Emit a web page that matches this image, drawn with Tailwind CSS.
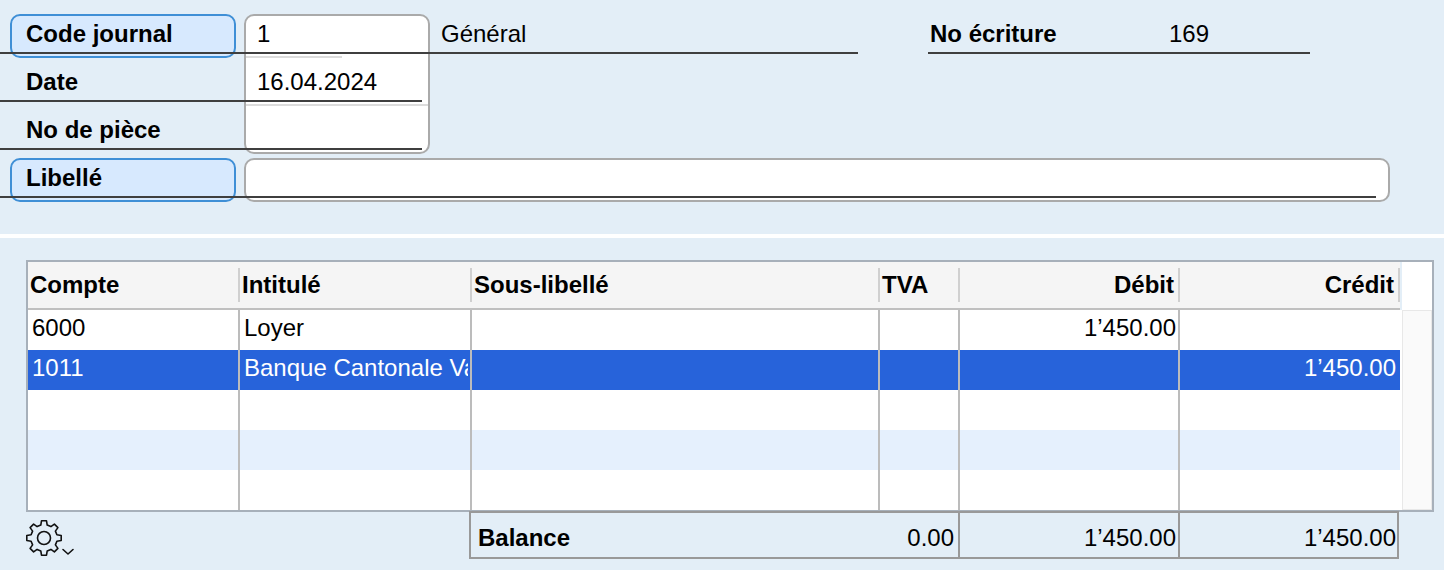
<!DOCTYPE html>
<html lang="fr">
<head>
<meta charset="utf-8">
<meta name="viewport" content="width=device-width, initial-scale=1">
<title>Écriture</title>
<script src="https://cdn.jsdelivr.net/npm/@tailwindcss/browser@4"></script>
</head>
<body class="min-h-screen bg-[#e3eef7] font-['Liberation_Sans',Arial,sans-serif] text-2xl/7 text-black">
<form class="relative pt-3.5 pb-8">
  <div class="flex pl-2.5">
    <div class="flex w-[226px] shrink-0 flex-col">
      <button type="button" class="h-11 rounded-[10px] border-2 border-[#3f8fd6] bg-[#d7e9fe] pb-1 pl-3.5 text-left font-bold">Code journal</button>
      <label for="date" class="flex h-12 items-center pl-4 font-bold">Date</label>
      <label for="piece" class="flex h-12 items-center pl-4 font-bold">No de pièce</label>
    </div>
    <div class="ml-2 flex w-[186px] shrink-0 flex-col rounded-[10px] border-2 border-[#aaaaaa] bg-white">
      <input id="code" aria-label="Code journal" value="1" class="h-10 w-full bg-transparent pb-1 pl-[11px] outline-none">
      <div class="h-0.5 w-24 bg-[#dcdcdc]"></div>
      <input id="date" value="16.04.2024" class="h-[46px] w-full bg-transparent pt-0.5 pl-[11px] outline-none">
      <div class="h-0.5 bg-[#dcdcdc]"></div>
      <input id="piece" class="h-[46px] w-full bg-transparent pt-0.5 pl-[11px] outline-none">
    </div>
    <div class="flex h-10 min-w-0 flex-1 items-center pl-[11px]">
      <span class="w-[487px]">Général</span>
      <div class="flex h-10 w-[382px] items-center border-b-2 border-[#3f3f3f] pt-0.5 pl-0.5">
        <span id="ecriture" class="w-[239px] font-bold">No écriture</span>
        <output aria-labelledby="ecriture">169</output>
      </div>
    </div>
  </div>
  <div class="mt-1 flex gap-2 pr-[54px] pl-2.5">
    <button type="button" class="h-11 w-[226px] shrink-0 rounded-[10px] border-2 border-[#3f8fd6] bg-[#d7e9fe] pb-1 pl-3.5 text-left font-bold">Libellé</button>
    <input aria-label="Libellé" class="h-11 min-w-0 flex-1 rounded-[10px] border-2 border-[#aaaaaa] bg-white px-[11px] pb-1 outline-none">
  </div>
  <!-- Rules drawn across the labels and fields -->
  <div class="pointer-events-none absolute inset-x-0 top-[52px] flex flex-col gap-[46px]" aria-hidden="true">
    <div class="h-0.5 w-[858px] bg-[#3f3f3f]"></div>
    <div class="h-0.5 w-[422px] bg-[#3f3f3f]"></div>
    <div class="h-0.5 w-[422px] bg-[#3f3f3f]"></div>
    <div class="mr-[68px] h-0.5 bg-[#3f3f3f]"></div>
  </div>
</form>

<div class="h-1 bg-white"></div>

<main class="pt-[22px] pr-2.5 pl-[26px]">
  <div class="flex border-2 border-[#a7b0ba] bg-white">
    <table class="w-full min-w-0 flex-1 table-fixed border-separate border-spacing-0">
      <colgroup>
        <col class="w-[212px]"><col class="w-[232px]"><col><col class="w-20"><col class="w-[220px]"><col class="w-[220px]">
      </colgroup>
      <thead class="bg-[#f5f5f5] text-left">
        <tr class="h-12">
          <th class="border-b-2 border-[#c0c0c0] p-0"><div class="flex h-[34px] items-center border-r-2 border-[#d0d0d0] pl-0.5">Compte</div></th>
          <th class="border-b-2 border-[#c0c0c0] p-0"><div class="flex h-[34px] items-center border-r-2 border-[#d0d0d0] pl-0.5">Intitulé</div></th>
          <th class="border-b-2 border-[#c0c0c0] p-0"><div class="flex h-[34px] items-center border-r-2 border-[#d0d0d0] pl-0.5">Sous-libellé</div></th>
          <th class="border-b-2 border-[#c0c0c0] p-0"><div class="flex h-[34px] items-center border-r-2 border-[#d0d0d0] pl-0.5">TVA</div></th>
          <th class="border-b-2 border-[#c0c0c0] p-0"><div class="flex h-[34px] items-center justify-end border-r-2 border-[#d0d0d0] pr-1">Débit</div></th>
          <th class="border-b-2 border-[#c0c0c0] p-0"><div class="flex h-[34px] items-center justify-end border-r-2 border-[#d0d0d0] pr-1">Crédit</div></th>
        </tr>
      </thead>
      <tbody>
        <tr class="h-10">
          <td class="border-r-2 border-[#bcbcbc] p-0 pb-1 pl-1">6000</td>
          <td class="border-r-2 border-[#bcbcbc] p-0 pr-0.5 pb-1 pl-1"><div class="overflow-hidden whitespace-nowrap">Loyer</div></td>
          <td class="border-r-2 border-[#bcbcbc] p-0"></td>
          <td class="border-r-2 border-[#bcbcbc] p-0"></td>
          <td class="border-r-2 border-[#bcbcbc] p-0 pr-0.5 pb-1 text-right">1’450.00</td>
          <td class="p-0"></td>
        </tr>
        <tr class="h-10 bg-[#2763da] text-white">
          <td class="border-r-2 border-[#bcbcbc] p-0 pb-1 pl-1">1011</td>
          <td class="border-r-2 border-[#bcbcbc] p-0 pr-0.5 pb-1 pl-1"><div class="overflow-hidden whitespace-nowrap">Banque Cantonale Vaudoise</div></td>
          <td class="border-r-2 border-[#bcbcbc] p-0"></td>
          <td class="border-r-2 border-[#bcbcbc] p-0"></td>
          <td class="border-r-2 border-[#bcbcbc] p-0"></td>
          <td class="p-0 pr-1 pb-1 text-right">1’450.00</td>
        </tr>
        <tr class="h-10">
          <td class="border-r-2 border-[#bcbcbc] p-0"></td><td class="border-r-2 border-[#bcbcbc] p-0"></td><td class="border-r-2 border-[#bcbcbc] p-0"></td><td class="border-r-2 border-[#bcbcbc] p-0"></td><td class="border-r-2 border-[#bcbcbc] p-0"></td><td class="p-0"></td>
        </tr>
        <tr class="h-10 bg-[#e5f0fd]">
          <td class="border-r-2 border-[#bcbcbc] p-0"></td><td class="border-r-2 border-[#bcbcbc] p-0"></td><td class="border-r-2 border-[#bcbcbc] p-0"></td><td class="border-r-2 border-[#bcbcbc] p-0"></td><td class="border-r-2 border-[#bcbcbc] p-0"></td><td class="p-0"></td>
        </tr>
        <tr class="h-10">
          <td class="border-r-2 border-[#bcbcbc] p-0"></td><td class="border-r-2 border-[#bcbcbc] p-0"></td><td class="border-r-2 border-[#bcbcbc] p-0"></td><td class="border-r-2 border-[#bcbcbc] p-0"></td><td class="border-r-2 border-[#bcbcbc] p-0"></td><td class="p-0"></td>
        </tr>
      </tbody>
    </table>
    <div class="flex w-8 shrink-0 flex-col">
      <div class="h-12 border-l-2 border-[#e3eef7]"></div>
      <div class="ml-0.5 flex-1 border border-[#e8e8e8] bg-[#fafafa]"></div>
    </div>
  </div>

  <div class="-mt-px flex pr-[35px]">
    <div class="w-[443px] shrink-0 pt-[7px]">
      <button type="button" aria-label="Options" class="block">
        <svg class="overflow-visible" width="50" height="40" viewBox="0 0 50 40" fill="none" stroke="#111111" stroke-width="1.6" stroke-linejoin="round" stroke-linecap="round">
          <path transform="translate(18 20)" d="M-2.500-17.200L2.500-17.200L3.200-12.900L6.900-11.400L10.400-13.900L13.900-10.400L11.400-6.900L12.900-3.200L17.200-2.500L17.200 2.500L12.900 3.200L11.400 6.900L13.900 10.400L10.400 13.900L6.900 11.400L3.200 12.900L2.500 17.200L-2.500 17.200L-3.200 12.900L-6.900 11.400L-10.400 13.900L-13.900 10.400L-11.400 6.900L-12.900 3.200L-17.200 2.500L-17.200-2.500L-12.900-3.200L-11.400-6.900L-13.900-10.400L-10.400-13.900L-6.900-11.400L-3.200-12.900Z"/>
          <circle cx="18" cy="20" r="6.500"/>
          <path d="M37 31.500l5 4.500 5-4.500"/>
        </svg>
      </button>
    </div>
    <div class="flex h-12 min-w-0 flex-1 border-2 border-[#999999]">
      <div class="flex flex-1 items-center justify-between border-r-2 border-[#999999] pt-1.5 pr-1 pl-[7px]"><span class="font-bold">Balance</span><output>0.00</output></div>
      <output class="flex w-[220px] items-center justify-end border-r-2 border-[#999999] pt-1.5 pr-0.5">1’450.00</output>
      <output class="flex w-[217px] items-center justify-end pt-1.5 pr-px">1’450.00</output>
    </div>
  </div>
</main>
</body>
</html>
